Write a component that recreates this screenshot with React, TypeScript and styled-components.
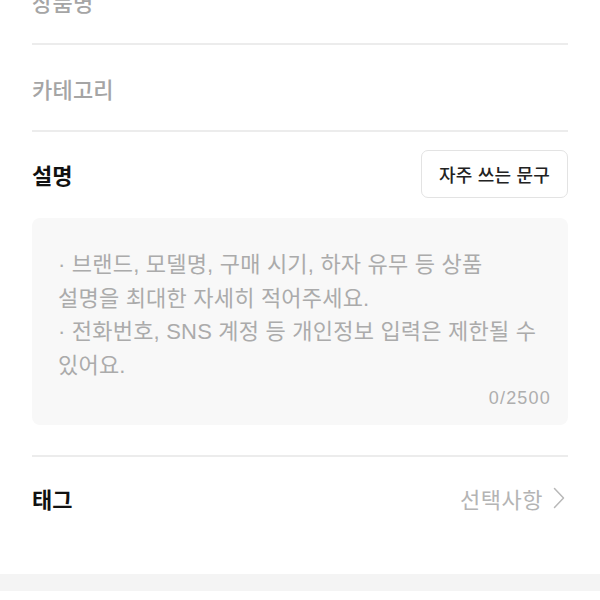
import styled, { createGlobalStyle } from "styled-components";

const GlobalStyle = createGlobalStyle`
  html, body {
    margin: 0;
    padding: 0;
    background: #ffffff;
    overflow: hidden;
  }
  body {
    font-family: "Liberation Sans", "Noto Sans CJK KR", sans-serif;
    -webkit-font-smoothing: antialiased;
  }
`;

const placeholder = [
  "· 브랜드, 모델명, 구매 시기, 하자 유무 등 상품",
  "설명을 최대한 자세히 적어주세요.",
  "· 전화번호, SNS 계정 등 개인정보 입력은 제한될 수",
  "있어요.",
];

export default function App() {
  return (
    <>
      <GlobalStyle />
      <Page>
        <Section>
          <FieldRow $first>
            <FieldLabel>상품명</FieldLabel>
          </FieldRow>
          <FieldRow>
            <FieldLabel>카테고리</FieldLabel>
          </FieldRow>
          <Description>
            <DescHeader>
              <Title>설명</Title>
              <PhraseButton type="button">자주 쓰는 문구</PhraseButton>
            </DescHeader>
            <TextBox>
              <Placeholder>
                {placeholder.map((line) => (
                  <Line key={line}>{line}</Line>
                ))}
              </Placeholder>
              <Counter>0/2500</Counter>
            </TextBox>
          </Description>
          <TagRow>
            <Title>태그</Title>
            <Optional>
              선택사항
              <svg width="12" height="22" viewBox="0 0 12 22" fill="none">
                <path
                  d="M1.5 1.5l9 9.5-9 9.5"
                  stroke="#b8b8b8"
                  strokeWidth="1.5"
                  strokeLinecap="round"
                  strokeLinejoin="round"
                />
              </svg>
            </Optional>
          </TagRow>
        </Section>
        <Band />
      </Page>
    </>
  );
}

const Page = styled.div`
  width: 600px;
  height: 600px;
  overflow: hidden;
  background: #ffffff;
`;

const Section = styled.div`
  padding: 0 32px;
`;

const FieldRow = styled.div<{ $first?: boolean }>`
  display: flex;
  align-items: center;
  height: 85px;
  margin-top: ${(p) => (p.$first ? "-42px" : "0")};
  border-bottom: 2px solid #ececec;
`;

const FieldLabel = styled.span`
  font-size: 22px;
  font-weight: 500;
  color: #a5a5a5;
  letter-spacing: 0.2px;
`;

const Description = styled.div`
  padding: 18px 0 30px;
  border-bottom: 2px solid #ececec;
`;

const DescHeader = styled.div`
  display: flex;
  align-items: center;
  justify-content: space-between;
`;

const Title = styled.span`
  font-size: 22px;
  font-weight: 700;
  color: #111111;
`;

const PhraseButton = styled.button`
  height: 48px;
  padding: 0 17px;
  border: 1px solid #e3e3e3;
  border-radius: 7px;
  background: #ffffff;
  font-family: inherit;
  font-size: 18px;
  font-weight: 500;
  color: #222222;
  letter-spacing: 0.2px;
`;

const TextBox = styled.div`
  margin-top: 20px;
  height: 207px;
  box-sizing: border-box;
  background: #f8f8f8;
  border-radius: 8px;
  padding: 30px 17px 0 26px;
  display: flex;
  flex-direction: column;
`;

const Placeholder = styled.div`
  font-size: 22px;
  line-height: 33.5px;
  color: #ababab;
  letter-spacing: 0.2px;
`;

const Line = styled.div`
  white-space: nowrap;
`;

const Counter = styled.div`
  margin-top: 6px;
  align-self: flex-end;
  font-size: 18px;
  letter-spacing: 1.2px;
  color: #aeaeae;
`;

const TagRow = styled.div`
  display: flex;
  align-items: center;
  justify-content: space-between;
  height: 82px;
`;

const Optional = styled.span`
  display: flex;
  align-items: center;
  gap: 10px;
  margin-right: 3px;
  font-size: 22px;
  color: #b4b4b4;
  letter-spacing: 0.5px;
`;

const Band = styled.div`
  margin-top: 35px;
  height: 17px;
  background: #f4f4f4;
`;
